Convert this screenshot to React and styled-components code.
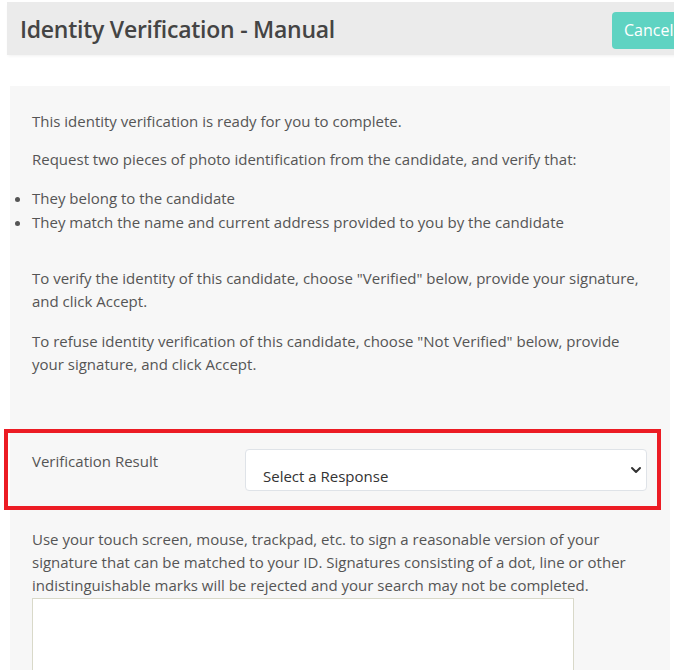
import React, { useState } from 'react';
import styled, { createGlobalStyle } from 'styled-components';

const GlobalStyle = createGlobalStyle`
    html, body {
        margin: 0;
        padding: 0;
        background: #ffffff;
        overflow: hidden;
    }
    body {
        font-family: "Open Sans", "Liberation Sans", sans-serif;
        color: #555555;
    }
`;

const Page = styled.div`
    width: 674px;
    height: 670px;
    overflow: hidden;
`;

const Header = styled.div`
    margin: 2px -20px 0 7px;
    height: 53px;
    background-color: #ebebeb;
    box-shadow: 0 2px 3px -1px rgba(0, 0, 0, 0.06);
    display: flex;
    align-items: center;
    justify-content: space-between;
    padding-left: 13px;
`;

const Title = styled.h1`
    margin: 0;
    font-size: 23px;
    font-weight: 600;
    color: #444444;
    letter-spacing: -0.25px;
`;

const CancelButton = styled.button`
    height: 37px;
    width: 82px;
    margin-top: 3px;
    border: none;
    border-radius: 4px;
    background-color: #5fd3c2;
    color: #ffffff;
    font-family: inherit;
    font-size: 16px;
    text-align: left;
    padding: 0 0 0 12px;
`;

const Panel = styled.div`
    margin: 31px 4px 0 10px;
    background-color: #f7f7f7;
    padding: 24px 0 0 22px;
    min-height: 600px;
`;

const Para = styled.p`
    margin: 0 0 ${(p) => p.$gap || 15}px;
    font-size: 15px;
    line-height: 23px;
    max-width: 612px;
`;

const List = styled.ul`
    margin: 0 0 33px;
    padding-left: 0;
    font-size: 15px;
    line-height: 24px;
`;

const FormRow = styled.div`
    margin: 53px 9px 0 -28px;
    border: 4px solid #ec1c24;
    display: flex;
    align-items: flex-start;
    padding: 16px 5px 15px 24px;
`;

const Label = styled.label`
    width: 213px;
    flex-shrink: 0;
    font-size: 15px;
    line-height: 22px;
    padding-top: 1px;
`;

const SelectBox = styled.div`
    flex: 1;
    height: 42px;
    margin-right: 5px;
    background: #ffffff;
    border: 1px solid #dfe3e8;
    border-radius: 4px;
    display: flex;
    align-items: center;
    justify-content: space-between;
    padding: 0 4px 0 17px;
    box-sizing: border-box;
    font-size: 15px;
    color: #333333;
`;

const SelectText = styled.span`
    padding-top: 12px;
`;

const SignatureHint = styled(Para)`
    margin: 18px 0 0;
`;

const SignaturePad = styled.div`
    width: 540px;
    height: 120px;
    margin-top: 1px;
    background: #ffffff;
    border: 1px solid #d9d9c9;
`;

const Chevron = () => (
    <svg width="12" height="12" viewBox="0 0 12 12">
        <path d="M2 4l4 4 4-4" fill="none" stroke="#333" strokeWidth="2" strokeLinecap="round" strokeLinejoin="round" />
    </svg>
);

const App = () => {
    const [response] = useState('Select a Response');

    return (
        <Page>
            <GlobalStyle />
            <Header>
                <Title>Identity Verification - Manual</Title>
                <CancelButton>Cancel</CancelButton>
            </Header>
            <Panel>
                <Para>This identity verification is ready for you to complete.</Para>
                <Para>Request two pieces of photo identification from the candidate, and verify that:</Para>
                <List>
                    <li>They belong to the candidate</li>
                    <li>They match the name and current address provided to you by the candidate</li>
                </List>
                <Para $gap={17}>
                    To verify the identity of this candidate, choose "Verified" below, provide your signature,
                    and click Accept.
                </Para>
                <Para $gap={0}>
                    To refuse identity verification of this candidate, choose "Not Verified" below, provide
                    your signature, and click Accept.
                </Para>
                <FormRow>
                    <Label>Verification Result</Label>
                    <SelectBox>
                        <SelectText>{response}</SelectText>
                        <Chevron />
                    </SelectBox>
                </FormRow>
                <SignatureHint>
                    Use your touch screen, mouse, trackpad, etc. to sign a reasonable version of your
                    signature that can be matched to your ID. Signatures consisting of a dot, line or other
                    indistinguishable marks will be rejected and your search may not be completed.
                </SignatureHint>
                <SignaturePad />
            </Panel>
        </Page>
    );
};

export default App;
